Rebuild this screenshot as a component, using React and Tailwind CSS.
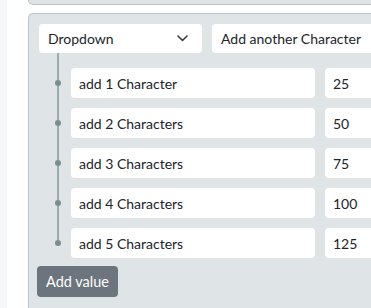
import React from "react";

const rows = [
  ["add 1 Character", "25"],
  ["add 2 Characters", "50"],
  ["add 3 Characters", "75"],
  ["add 4 Characters", "100"],
  ["add 5 Characters", "125"],
];

export default function App() {
  return (
    <div
      className="flex w-[371px] h-[308px] overflow-hidden bg-white text-[#212529]"
      style={{ fontFamily: 'Lato, "Noto Sans", sans-serif' }}
    >
      <div className="w-[7px] shrink-0 bg-[#f5f7fb]" />
      <div className="w-[21px] shrink-0 bg-white" />
      <div className="flex flex-col flex-1 min-w-0">
        <div className="h-[5px] shrink-0 bg-[#dfe5e6] border-l border-b border-[#b9c4c6] rounded-bl-[5px]" />
        <div className="mt-[8px] flex-1 bg-[#dfe5e6] border-l border-t border-[#b9c4c6] rounded-tl-[5px] pl-[10px] pt-[10px] flex flex-col">
          <div className="flex gap-[10px]">
            <div className="w-[163px] h-[29px] shrink-0 bg-white rounded-[4px] flex items-center justify-between pl-[9px] pr-[14px] text-[14px]">
              <span>Dropdown</span>
              <svg width="11" height="7" viewBox="0 0 11 7" fill="none">
                <path d="M1 1l4.5 4.5L10 1" stroke="#343a40" strokeWidth="1.5" strokeLinecap="round" strokeLinejoin="round" />
              </svg>
            </div>
            <div className="w-[200px] h-[29px] shrink-0 bg-white rounded-l-[4px] flex items-center pl-[9px] text-[14px] whitespace-nowrap">
              Add another Character
            </div>
          </div>
          <div className="relative ml-[18px] pl-[14px] pt-[15px] flex flex-col gap-[10px]">
            <div className="absolute left-0 top-0 bottom-[14px] w-[2px] bg-[#9eacae]" />
            {rows.map(([name, val]) => (
              <div key={name} className="relative flex gap-[10px] h-[30px]">
                <div className="absolute left-[-16px] top-[12px] w-[6px] h-[6px] rounded-full bg-[#7b8d90]" />
                <div className="w-[244px] shrink-0 bg-white rounded-[4px] flex items-center pl-[8px] text-[14px] whitespace-nowrap">
                  {name}
                </div>
                <div className="w-[60px] shrink-0 bg-white rounded-l-[4px] flex items-center pl-[8px] text-[14px]">
                  {val}
                </div>
              </div>
            ))}
          </div>
          <button className="mt-[8px] ml-[-2px] self-start h-[31px] w-[81px] bg-[#6c757d] text-white rounded-[4px] text-[14.5px] flex items-center justify-center">
            Add value
          </button>
        </div>
      </div>
    </div>
  );
}
